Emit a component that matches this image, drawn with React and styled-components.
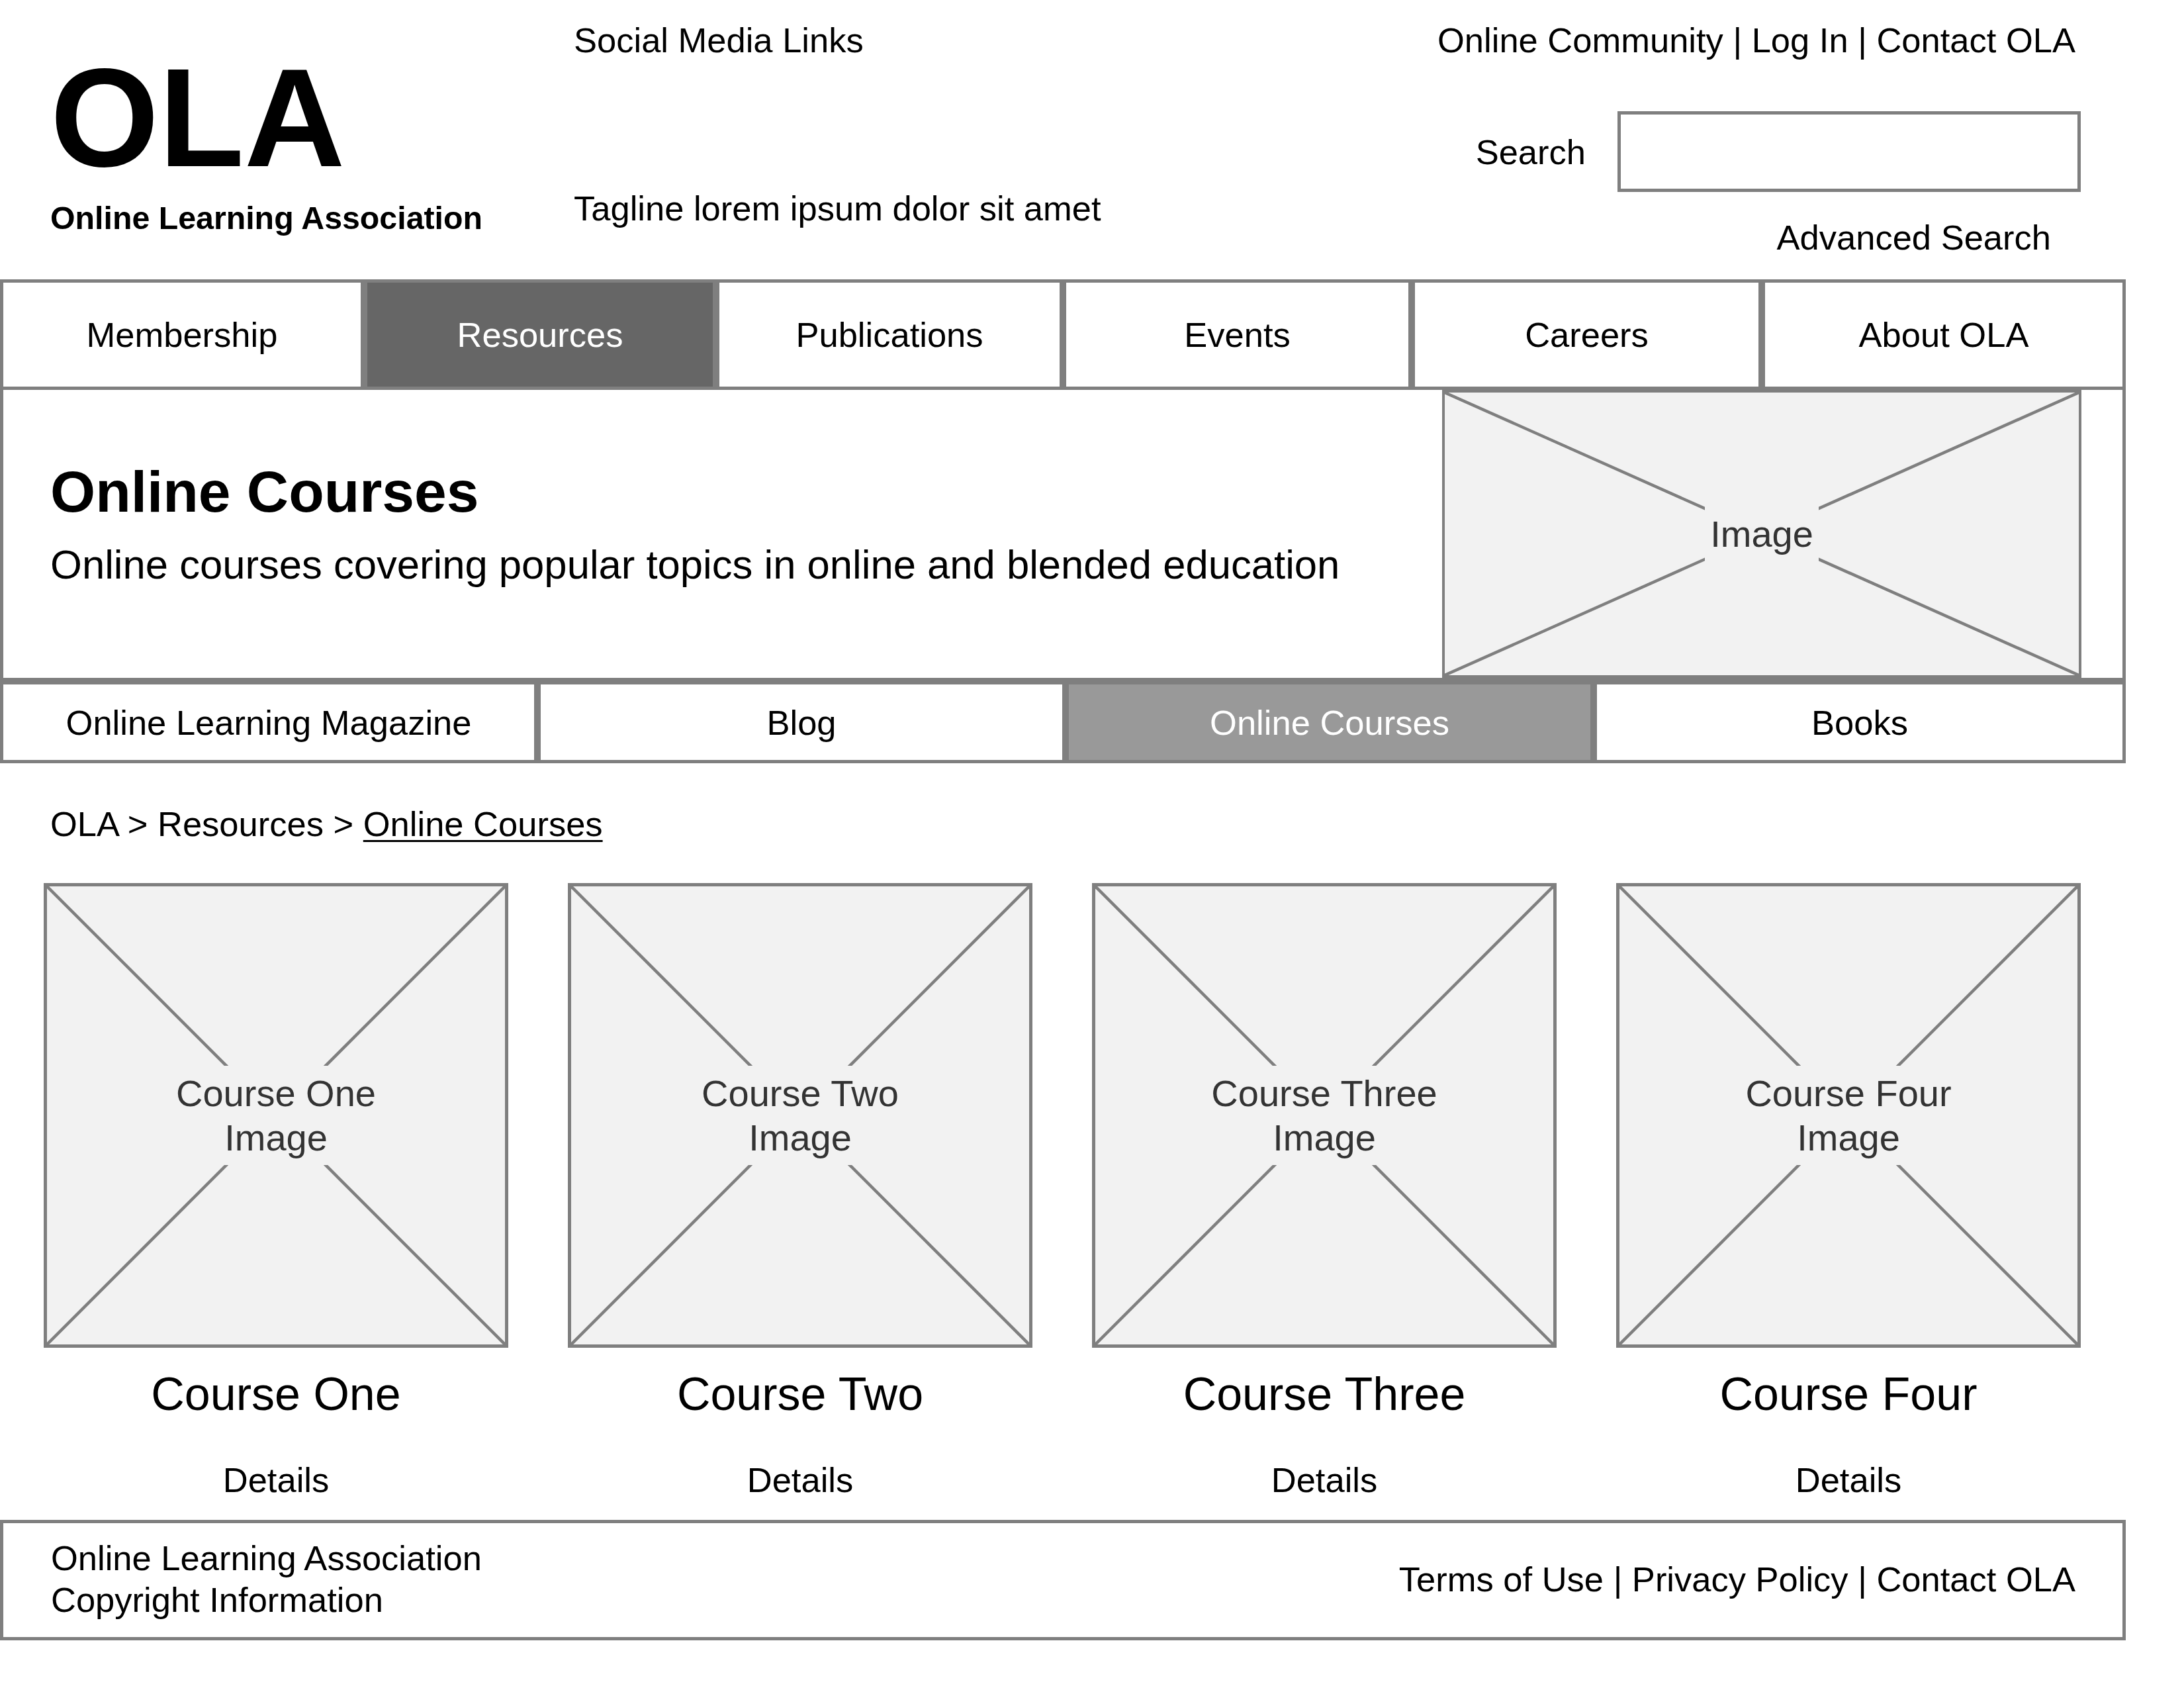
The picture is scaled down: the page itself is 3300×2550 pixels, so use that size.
import React from "react";
import styled, { createGlobalStyle } from "styled-components";

const GlobalStyle = createGlobalStyle`
  html, body {
    margin: 0;
    padding: 0;
    background: #fff;
  }
  body {
    font-family: "Liberation Sans", Arial, sans-serif;
    color: #000;
  }
`;

const LINE = "#7f7f7f";

const Page = styled.div`
  width: 3212px;
  font-size: 52.5px;
  line-height: 63px;
`;

const Header = styled.header`
  display: grid;
  grid-template-columns: 791px 1fr auto;
  height: 422px;
  padding: 0 68px 0 76px;
  box-sizing: border-box;
`;

const Brand = styled.div`
  display: flex;
  flex-direction: column;
`;

const Logo = styled.div`
  margin-top: 73px;
  font-size: 211px;
  line-height: 210px;
  font-weight: 700;
`;

const LogoSub = styled.div`
  margin-top: 17px;
  font-size: 48.3px;
  line-height: 58px;
  font-weight: 700;
`;

const Middle = styled.div`
  padding-top: 29px;
  display: flex;
  flex-direction: column;
`;

const Tagline = styled.div`
  margin-top: 191px;
`;

const Utility = styled.div`
  display: flex;
  flex-direction: column;
  align-items: flex-end;
`;

const TopLinks = styled.div`
  margin-top: 29px;
  padding-right: 8px;
  white-space: nowrap;
`;

const SearchRow = styled.div`
  margin-top: 76px;
  display: flex;
  align-items: center;
  gap: 48px;
`;

const SearchBox = styled.div`
  width: 700px;
  height: 122px;
  border: 5px solid ${LINE};
  box-sizing: border-box;
`;

const AdvancedSearch = styled.div`
  margin-top: 37px;
  padding-right: 45px;
`;

const Nav = styled.nav`
  display: grid;
  grid-template-columns: ${p => p.cols};
  height: ${p => p.h}px;
`;

const NavCell = styled.div`
  display: flex;
  align-items: center;
  justify-content: center;
  border: 5px solid ${LINE};
  box-sizing: border-box;
  background: ${p => (p.active ? p.fill : "#fff")};
  color: ${p => (p.active ? "#fff" : "#000")};
`;

const Hero = styled.section`
  display: flex;
  height: 440px;
  border: 5px solid ${LINE};
  border-top: none;
  box-sizing: border-box;
  padding-right: 62px;
`;

const HeroText = styled.div`
  flex: 1;
  padding: 104px 0 0 71px;
`;

const HeroTitle = styled.h1`
  margin: 0;
  font-size: 87.6px;
  line-height: 100px;
  font-weight: 700;
`;

const HeroLead = styled.p`
  margin: 23px 0 0;
  font-size: 61.6px;
  line-height: 73px;
`;

const Breadcrumb = styled.div`
  margin-top: 60px;
  padding-left: 76px;
  a {
    color: #000;
    text-decoration: underline;
    text-underline-offset: 6px;
    text-decoration-thickness: 3px;
  }
`;

const Cards = styled.div`
  margin-top: 58px;
  padding-left: 66px;
  display: grid;
  grid-template-columns: repeat(4, 702px);
  column-gap: 90px;
`;

const Card = styled.div`
  display: flex;
  flex-direction: column;
  align-items: center;
`;

const Placeholder = styled.div`
  position: relative;
  width: ${p => p.w}px;
  height: ${p => p.h}px;
  flex-shrink: 0;
  border: ${p => p.bw}px solid ${LINE};
  box-sizing: border-box;
  background: #f2f2f2;
  display: flex;
  align-items: center;
  justify-content: center;
  svg {
    position: absolute;
    inset: 0;
    width: 100%;
    height: 100%;
  }
`;

const PlaceholderLabel = styled.span`
  position: relative;
  z-index: 1;
  padding: 8px;
  background: #f2f2f2;
  color: #333;
  font-size: 56px;
  line-height: 67px;
  text-align: center;
`;

const CardTitle = styled.div`
  margin-top: 28px;
  font-size: 70px;
  line-height: 84px;
`;

const CardLink = styled.div`
  margin-top: 56px;
`;

const Footer = styled.footer`
  margin-top: 29px;
  display: flex;
  justify-content: space-between;
  align-items: center;
  border: 5px solid ${LINE};
  padding: 21px 71px 25px 72px;
`;

const Cross = () => (
  <svg viewBox="0 0 100 100" preserveAspectRatio="none">
    <line x1="0" y1="0" x2="100" y2="100" stroke={LINE} strokeWidth="4.5" vectorEffect="non-scaling-stroke" />
    <line x1="100" y1="0" x2="0" y2="100" stroke={LINE} strokeWidth="4.5" vectorEffect="non-scaling-stroke" />
  </svg>
);

const ImageBox = ({ w, h, bw, children }) => (
  <Placeholder w={w} h={h} bw={bw}>
    <Cross />
    <PlaceholderLabel>{children}</PlaceholderLabel>
  </Placeholder>
);

const mainNav = ["Membership", "Resources", "Publications", "Events", "Careers", "About OLA"];
const subNav = ["Online Learning Magazine", "Blog", "Online Courses", "Books"];
const courses = ["One", "Two", "Three", "Four"];

export default function App() {
  return (
    <Page>
      <GlobalStyle />
      <Header>
        <Brand>
          <Logo>OLA</Logo>
          <LogoSub>Online Learning Association</LogoSub>
        </Brand>
        <Middle>
          <div>Social Media Links</div>
          <Tagline>Tagline lorem ipsum dolor sit amet</Tagline>
        </Middle>
        <Utility>
          <TopLinks>Online Community | Log In | Contact OLA</TopLinks>
          <SearchRow>
            <span>Search</span>
            <SearchBox />
          </SearchRow>
          <AdvancedSearch>Advanced Search</AdvancedSearch>
        </Utility>
      </Header>

      <Nav cols="550px 532px 524px 527px 529px 550px" h={167}>
        {mainNav.map(item => (
          <NavCell key={item} active={item === "Resources"} fill="#666666">
            {item}
          </NavCell>
        ))}
      </Nav>

      <Hero>
        <HeroText>
          <HeroTitle>Online Courses</HeroTitle>
          <HeroLead>Online courses covering popular topics in online and blended education</HeroLead>
        </HeroText>
        <ImageBox w={966} h={435} bw={4}>
          Image
        </ImageBox>
      </Hero>

      <Nav cols="812px 798px 798px 804px" h={124}>
        {subNav.map(item => (
          <NavCell key={item} active={item === "Online Courses"} fill="#999999">
            {item}
          </NavCell>
        ))}
      </Nav>

      <Breadcrumb>
        OLA &gt; Resources &gt; <a href="#">Online Courses</a>
      </Breadcrumb>

      <Cards>
        {courses.map(name => (
          <Card key={name}>
            <ImageBox w={702} h={702} bw={5}>
              Course {name}
              <br />
              Image
            </ImageBox>
            <CardTitle>Course {name}</CardTitle>
            <CardLink>Details</CardLink>
          </Card>
        ))}
      </Cards>

      <Footer>
        <div>
          Online Learning Association
          <br />
          Copyright Information
        </div>
        <div>Terms of Use | Privacy Policy | Contact OLA</div>
      </Footer>
    </Page>
  );
}
